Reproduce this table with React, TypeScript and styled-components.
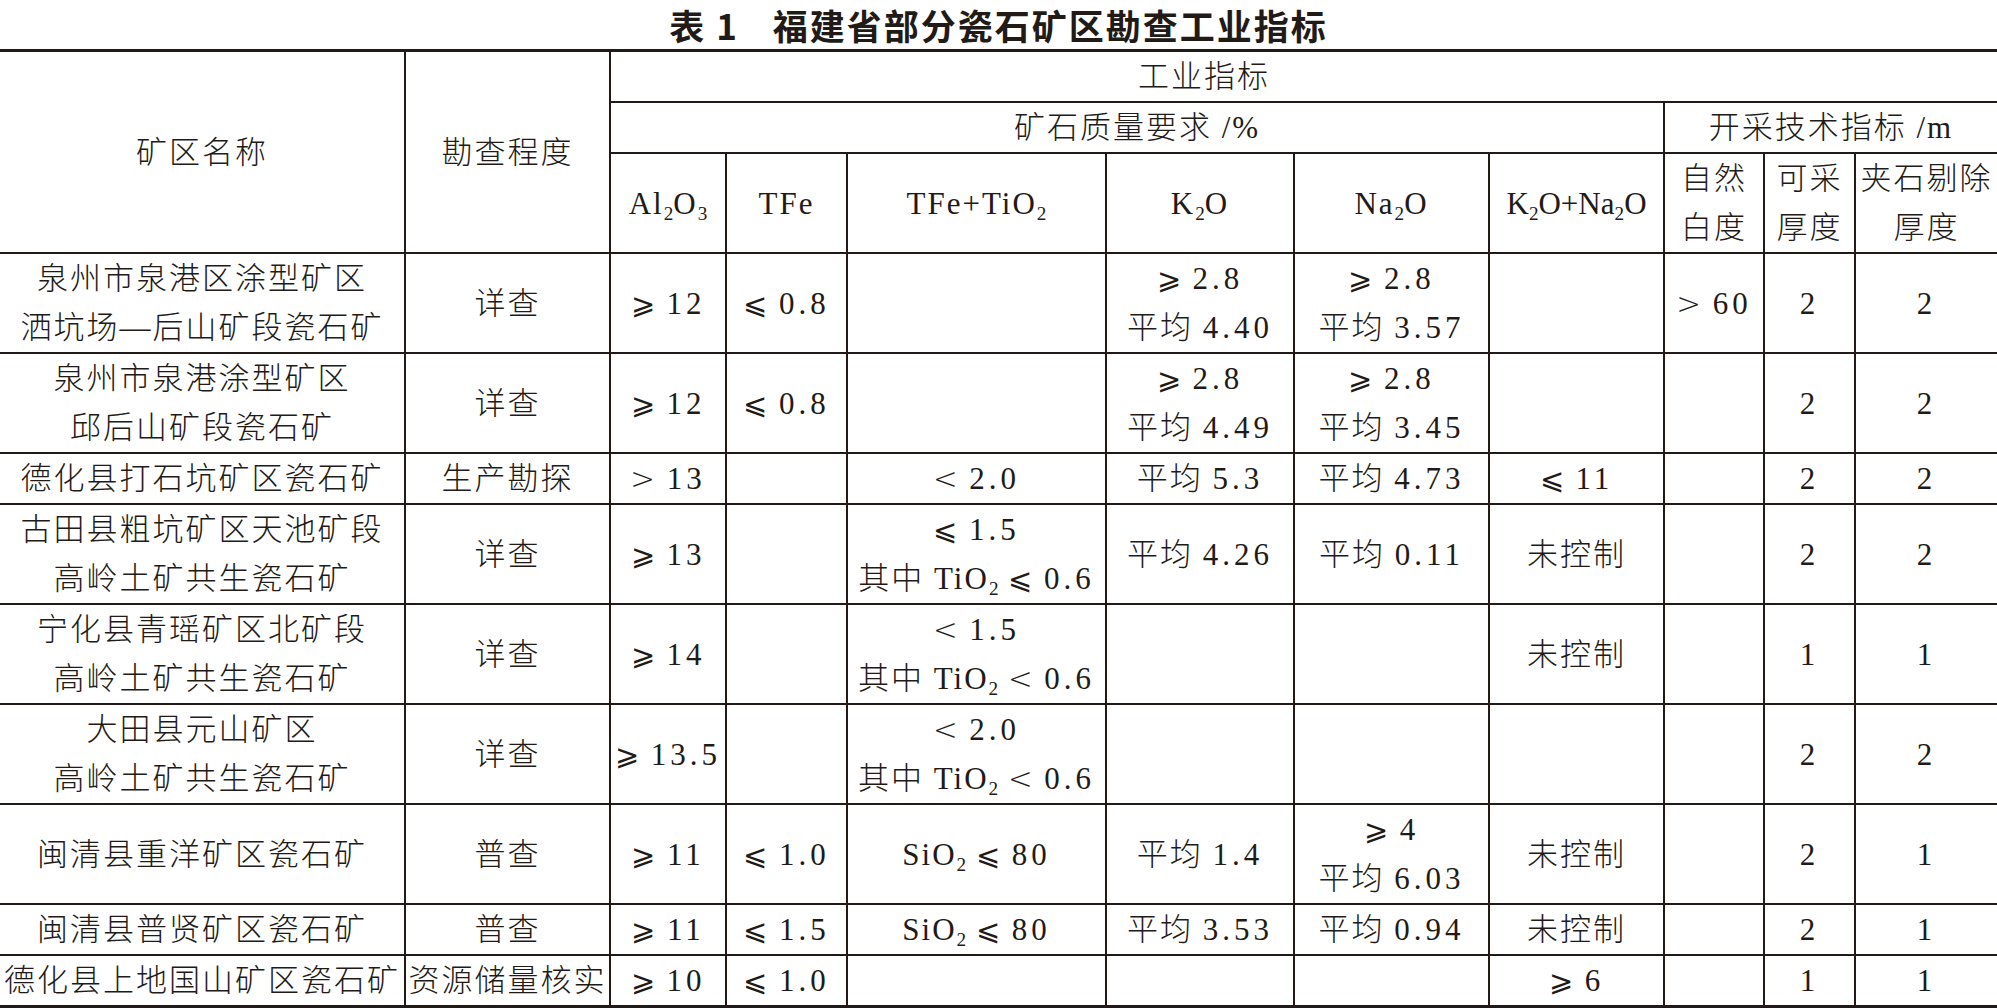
import React from "react";
import styled, { createGlobalStyle } from "styled-components";

const GlobalStyle = createGlobalStyle`
  html, body {
    margin: 0;
    padding: 0;
    background: #ffffff;
  }
`;

const ink = "#221a16";

const cols = [405, 205, 116, 121, 259, 188, 195, 175, 100, 91, 142];

const rows: string[][] = [
  ["泉州市泉港区涂型矿区\n洒坑场—后山矿段瓷石矿", "详查", "⩾ 12", "⩽ 0.8", "", "⩾ 2.8\n平均 4.40", "⩾ 2.8\n平均 3.57", "", "> 60", "2", "2"],
  ["泉州市泉港涂型矿区\n邱后山矿段瓷石矿", "详查", "⩾ 12", "⩽ 0.8", "", "⩾ 2.8\n平均 4.49", "⩾ 2.8\n平均 3.45", "", "", "2", "2"],
  ["德化县打石坑矿区瓷石矿", "生产勘探", "> 13", "", "< 2.0", "平均 5.3", "平均 4.73", "⩽ 11", "", "2", "2"],
  ["古田县粗坑矿区天池矿段\n高岭土矿共生瓷石矿", "详查", "⩾ 13", "", "⩽ 1.5\n其中 TiO_2 ⩽ 0.6", "平均 4.26", "平均 0.11", "未控制", "", "2", "2"],
  ["宁化县青瑶矿区北矿段\n高岭土矿共生瓷石矿", "详查", "⩾ 14", "", "< 1.5\n其中 TiO_2 < 0.6", "", "", "未控制", "", "1", "1"],
  ["大田县元山矿区\n高岭土矿共生瓷石矿", "详查", "⩾ 13.5", "", "< 2.0\n其中 TiO_2 < 0.6", "", "", "", "", "2", "2"],
  ["闽清县重洋矿区瓷石矿", "普查", "⩾ 11", "⩽ 1.0", "SiO_2 ⩽ 80", "平均 1.4", "⩾ 4\n平均 6.03", "未控制", "", "2", "1"],
  ["闽清县普贤矿区瓷石矿", "普查", "⩾ 11", "⩽ 1.5", "SiO_2 ⩽ 80", "平均 3.53", "平均 0.94", "未控制", "", "2", "1"],
  ["德化县上地国山矿区瓷石矿", "资源储量核实", "⩾ 10", "⩽ 1.0", "", "", "", "⩾ 6", "", "1", "1"],
];

// turns "TiO_2 ⩽ 0.6" into text with subscripts, spaced digits and light relation signs
function fmt(text: string) {
  return text.split("\n").map((line, i) => (
    <React.Fragment key={i}>
      {i > 0 && <br />}
      {line.split(/(_\d|[\d.]+|[⩾⩽<>])/).map((part, j) => {
        if (part.startsWith("_")) return <Sub key={j}>{part.slice(1)}</Sub>;
        if (/^[\d.]+$/.test(part)) return <Num key={j}>{part}</Num>;
        if (/^[⩾⩽<>]$/.test(part)) return <Rel key={j}>{part}</Rel>;
        return part;
      })}
    </React.Fragment>
  ));
}

export default function App() {
  return (
    <Page>
      <GlobalStyle />
      <Title>
        <TableNo>表 1</TableNo>福建省部分瓷石矿区勘查工业指标
      </Title>
      <Table>
        <colgroup>
          {cols.map((w, i) => (
            <col key={i} style={{ width: w }} />
          ))}
        </colgroup>
        <thead>
          <tr>
            <HeadCell rowSpan={3}>矿区名称</HeadCell>
            <HeadCell rowSpan={3}>勘查程度</HeadCell>
            <HeadCell colSpan={9} $shift>
              工业指标
            </HeadCell>
          </tr>
          <tr>
            <HeadCell colSpan={6}>矿石质量要求 /%</HeadCell>
            <HeadCell colSpan={3}>开采技术指标 /m</HeadCell>
          </tr>
          <tr>
            <HeadCell>{fmt("Al_2O_3")}</HeadCell>
            <HeadCell>TFe</HeadCell>
            <HeadCell>{fmt("TFe+TiO_2")}</HeadCell>
            <HeadCell>{fmt("K_2O")}</HeadCell>
            <HeadCell>{fmt("Na_2O")}</HeadCell>
            <HeadCell $tight>{fmt("K_2O+Na_2O")}</HeadCell>
            <HeadCell>
              自然
              <br />
              白度
            </HeadCell>
            <HeadCell>
              可采
              <br />
              厚度
            </HeadCell>
            <HeadCell>
              夹石剔除
              <br />
              厚度
            </HeadCell>
          </tr>
        </thead>
        <tbody>
          {rows.map((row, r) => (
            <tr key={r}>
              {row.map((cell, c) => (
                <Cell key={c}>{fmt(cell)}</Cell>
              ))}
            </tr>
          ))}
        </tbody>
      </Table>
    </Page>
  );
}

const Page = styled.div`
  width: 1997px;
  color: ${ink};
  background: #ffffff;
`;

const Title = styled.div`
  height: 49px;
  display: flex;
  align-items: center;
  justify-content: center;
  font-family: "Noto Sans CJK SC", "Liberation Sans", sans-serif;
  font-size: 35px;
  font-weight: 700;
  letter-spacing: 2px;
`;

const TableNo = styled.span`
  margin-right: 34px;
`;

const Table = styled.table`
  width: 1997px;
  table-layout: fixed;
  border-collapse: collapse;
  border-top: 3px solid ${ink};
  border-bottom: 3px solid ${ink};
  border-left: hidden;
  border-right: hidden;
  font-family: "Liberation Serif", "Noto Sans CJK SC", "DejaVu Sans", serif;
  font-size: 31px;
  line-height: 49px;
  letter-spacing: 2px;
`;

const Cell = styled.td`
  border: 2px solid ${ink};
  padding: 0;
  text-align: center;
  vertical-align: middle;
  white-space: nowrap;
  font-weight: 300;
`;

const HeadCell = styled.th<{ $shift?: boolean; $tight?: boolean }>`
  border: 2px solid ${ink};
  padding: 0 ${(p) => (p.$shift ? "200px" : "0")} 0 0;
  text-align: center;
  vertical-align: middle;
  white-space: nowrap;
  font-weight: 300;
  letter-spacing: ${(p) => (p.$tight ? "0" : "2px")};
`;

const Num = styled.span`
  letter-spacing: 4px;
`;

const Rel = styled.span`
  font-family: "DejaVu Sans", "Liberation Serif", serif;
  font-weight: 200;
  font-size: 0.95em;
  line-height: 0;
  letter-spacing: 0;
  margin-right: 2px;
`;

const Sub = styled.sub`
  font-size: 0.62em;
  line-height: 0;
  vertical-align: -0.3em;
  letter-spacing: 0;
`;
